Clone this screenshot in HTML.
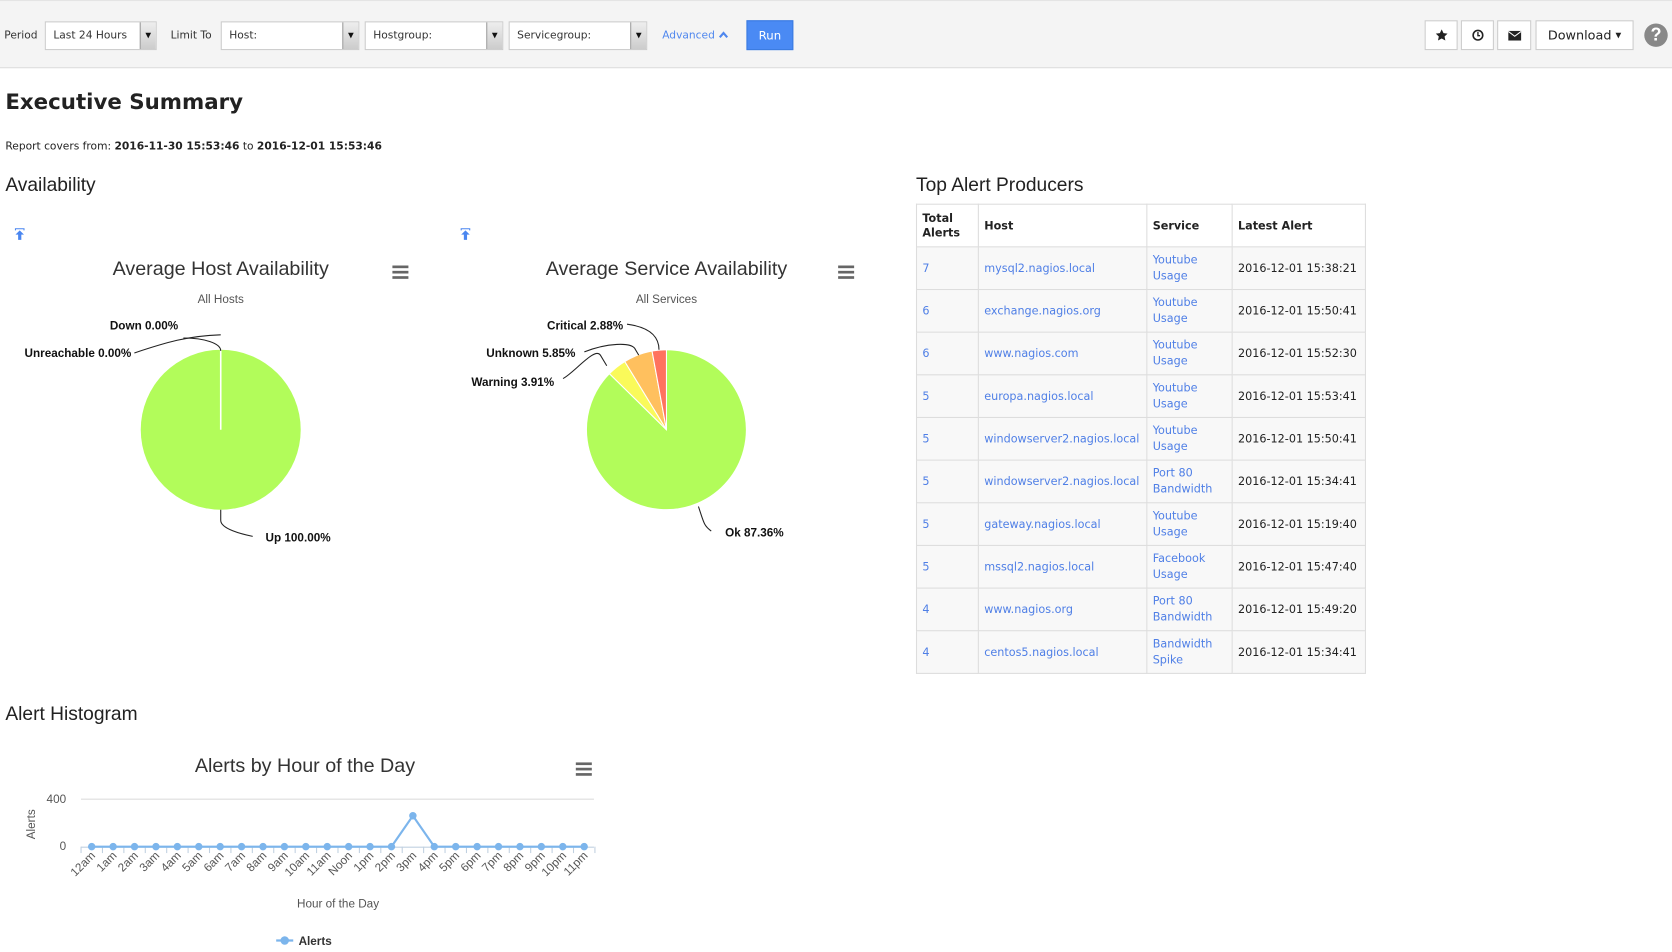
<!DOCTYPE html>
<html><head><meta charset="utf-8">
<style>
*{box-sizing:border-box;margin:0;padding:0}
html,body{width:1672px;height:952px;overflow:hidden;background:#fff}
#w{position:absolute;left:0;top:0;width:1568px;height:893px;transform:scale(1.06633);transform-origin:0 0;font-family:"DejaVu Sans",Verdana,sans-serif;color:#222}
.a{position:absolute;white-space:nowrap}
.tb{position:absolute;left:0;top:0;width:1568px;height:64px;background:#f4f4f4;border-bottom:1px solid #ddd;border-top:1px solid #e4e4e4}
.lbl{font-size:10px;color:#333}
.sel{position:absolute;top:19px;height:27px;background:#fff;border:1px solid #ccc;font-size:10px;color:#333;padding:7px 0 0 7px}
.sel .ar{position:absolute;right:0;top:0;width:15px;height:25px;background:linear-gradient(#eee,#ccc);border-left:1px solid #999;font-size:7px;text-align:center;padding-top:8px;color:#111}
.btn{position:absolute;top:18px;height:28px;background:#fff;border:1px solid #ccc;text-align:center}
.h2{font-family:"Liberation Sans",sans-serif;font-size:18px;color:#222}
table{border-collapse:collapse;font-size:10.5px}
td,th{border:1px solid #ddd;padding:0 5px;text-align:left;vertical-align:middle}
th{font-weight:bold;height:40px;background:#fff}
td{height:40px;background:#f8f8f8;color:#222}
td a{color:#4f7fe6;text-decoration:none}
svg text{font-family:"Liberation Sans",sans-serif}
</style></head><body><div id="w">
<div class="tb">
 <span class="a lbl" style="left:4px;top:27px">Period</span>
 <div class="sel" style="left:42px;width:105px">Last 24 Hours<div class="ar">▼</div></div>
 <span class="a lbl" style="left:160px;top:27px">Limit To</span>
 <div class="sel" style="left:207px;width:130px">Host:<div class="ar">▼</div></div>
 <div class="sel" style="left:342px;width:130px">Hostgroup:<div class="ar">▼</div></div>
 <div class="sel" style="left:477px;width:130px">Servicegroup:<div class="ar">▼</div></div>
 <span class="a" style="left:621px;top:27px;font-size:10px;color:#4f87ee">Advanced <svg width="9" height="7" viewBox="0 0 9 7"><path d="M1 6l3.5-4 3.5 4" fill="none" stroke="#4f87ee" stroke-width="2"/></svg></span>
 <div class="a" style="left:700px;top:18px;width:44px;height:28px;background:#4a8af4;border:1px solid #3b7be0;color:#fff;font-size:11px;text-align:center;line-height:28px">Run</div>
 <div class="btn" style="left:1336px;width:31px"><svg width="12" height="12" viewBox="0 0 24 24" style="margin-top:7px"><path d="M12 1l3.4 7.2 7.6.9-5.6 5.3 1.5 7.6L12 18.2 5.1 22l1.5-7.6L1 9.1l7.6-.9z" fill="#222"/></svg></div>
 <div class="btn" style="left:1370px;width:31px"><svg width="12" height="12" viewBox="0 0 24 24" style="margin-top:7px"><circle cx="12" cy="12" r="9" fill="none" stroke="#222" stroke-width="3"/><path d="M12 6v7h4" fill="none" stroke="#222" stroke-width="2.5"/></svg></div>
 <div class="btn" style="left:1404px;width:32px"><svg width="13" height="11" viewBox="0 0 26 20" style="margin-top:8px"><rect x="1" y="1" width="24" height="18" fill="#222"/><path d="M1 2l12 9 12-9" fill="none" stroke="#fff" stroke-width="2"/></svg></div>
 <div class="btn" style="left:1440px;width:92px;font-size:12px;color:#222;line-height:27px">Download <span style="font-size:7px;vertical-align:2px">▼</span></div>
 <div class="a" style="left:1542px;top:21px;width:22px;height:22px;border-radius:50%;background:#888;color:#fff;font:bold 17px 'Liberation Sans',sans-serif;text-align:center;line-height:22px">?</div>
</div>

<div class="a" style="left:5px;top:83px;font-size:20px;font-weight:bold;color:#222">Executive Summary</div>
<div class="a" style="left:5px;top:132px;font-size:10px;color:#222">Report covers from: <b>2016-11-30 15:53:46</b> to <b>2016-12-01 15:53:46</b></div>
<div class="a h2" style="left:5px;top:163px">Availability</div>
<div class="a h2" style="left:859px;top:163px">Top Alert Producers</div>
<div class="a h2" style="left:5px;top:659px">Alert Histogram</div>

<svg class="a" style="left:0;top:0" width="860" height="893">
 <g fill="#4a86f0"><path d="M14 214h9v2h-1v-1h-7v1h-1z"/><path d="M18.5 216l4 4h-2.5v5h-3v-5h-2.5z"/></g>
 <g fill="#4a86f0"><path d="M432 214h9v2h-1v-1h-7v1h-1z"/><path d="M436.5 216l4 4h-2.5v5h-3v-5h-2.5z"/></g>
 <text x="207" y="258" text-anchor="middle" font-size="18.5" fill="#333">Average Host Availability</text>
 <text x="207" y="284" text-anchor="middle" font-size="11" fill="#555">All Hosts</text>
 <g fill="#666"><rect x="368" y="249" width="15" height="2.5"/><rect x="368" y="254" width="15" height="2.5"/><rect x="368" y="259" width="15" height="2.5"/></g>
 <circle cx="207" cy="403" r="75" fill="#b2fc5a"/>
 <line x1="207" y1="403" x2="207" y2="328" stroke="#fff" stroke-width="1.5"/>
 <g fill="none" stroke="#222" stroke-width="1">
  <path d="M172 317c20 0 35 5 35 12"/><path d="M126 331c30-10 50-16 81-17"/>
  <path d="M207 478v10c0 8 20 13 30 15"/>
 </g>
 <g font-size="11" font-weight="bold" fill="#111">
  <text x="103" y="309">Down 0.00%</text><text x="23" y="335">Unreachable 0.00%</text><text x="249" y="508">Up 100.00%</text>
 </g>

 <text x="625" y="258" text-anchor="middle" font-size="18.5" fill="#333">Average Service Availability</text>
 <text x="625" y="284" text-anchor="middle" font-size="11" fill="#555">All Services</text>
 <g fill="#666"><rect x="786" y="249" width="15" height="2.5"/><rect x="786" y="254" width="15" height="2.5"/><rect x="786" y="259" width="15" height="2.5"/></g>
 <g stroke="#fff" stroke-width="1">
  <path d="M625 403L625 328A75 75 0 1 1 571.5 350.4Z" fill="#b2fc5a"/>
  <path d="M625 403L571.5 350.4A75 75 0 0 1 585.9 339Z" fill="#fafa5a"/>
  <path d="M625 403L585.9 339A75 75 0 0 1 611.5 329.2Z" fill="#ffc05e"/>
  <path d="M625 403L611.5 329.2A75 75 0 0 1 625 328Z" fill="#ff725e"/>
 </g>
 <g fill="none" stroke="#222" stroke-width="1">
  <path d="M588 304c15 2 30 8 30 24"/><path d="M548 330c20-8 45-10 48-2l3 5"/>
  <path d="M528 355c10-5 30-30 35-22l6 10"/><path d="M655 475c5 15 5 18 12 23"/>
 </g>
 <g font-size="11" font-weight="bold" fill="#111">
  <text x="513" y="309">Critical 2.88%</text><text x="456" y="335">Unknown 5.85%</text><text x="442" y="362">Warning 3.91%</text><text x="680" y="503">Ok 87.36%</text>
 </g>

 <text x="286" y="724" text-anchor="middle" font-size="18.5" fill="#333">Alerts by Hour of the Day</text>
 <g fill="#666"><rect x="540" y="715" width="15" height="2.5"/><rect x="540" y="720" width="15" height="2.5"/><rect x="540" y="725" width="15" height="2.5"/></g>
 <line x1="76" y1="749.5" x2="557" y2="749.5" stroke="#ddd"/>
 <line x1="76" y1="794.5" x2="557" y2="794.5" stroke="#c0d0e0"/>
 <g font-size="11" fill="#555"><text x="62" y="753" text-anchor="end">400</text><text x="62" y="797" text-anchor="end">0</text>
 <text transform="translate(33,773) rotate(-90)" text-anchor="middle">Alerts</text>
 <text x="317" y="851" text-anchor="middle">Hour of the Day</text></g>
 <g id="ticks" stroke="#c0d0e0"></g>
 <polyline id="ln" fill="none" stroke="#7cb5ec" stroke-width="2"/>
 <g id="pts" fill="#7cb5ec"></g>
 <g id="xl" font-size="11" fill="#555"></g>
 <line x1="259" y1="882" x2="275" y2="882" stroke="#7cb5ec" stroke-width="2"/><circle cx="267" cy="882" r="4" fill="#7cb5ec"/>
 <text x="280" y="886" font-size="11" font-weight="bold" fill="#333">Alerts</text>
</svg>

<table class="a" style="left:859px;top:191px;width:422px">
<tr><th style="width:58px;line-height:14px">Total<br>Alerts</th><th style="width:158px">Host</th><th style="width:80px">Service</th><th>Latest Alert</th></tr>
<tr><td><a>7</a></td><td><a>mysql2.nagios.local</a></td><td style="line-height:15px"><a>Youtube<br>Usage</a></td><td>2016-12-01 15:38:21</td></tr>
<tr><td><a>6</a></td><td><a>exchange.nagios.org</a></td><td style="line-height:15px"><a>Youtube<br>Usage</a></td><td>2016-12-01 15:50:41</td></tr>
<tr><td><a>6</a></td><td><a>www.nagios.com</a></td><td style="line-height:15px"><a>Youtube<br>Usage</a></td><td>2016-12-01 15:52:30</td></tr>
<tr><td><a>5</a></td><td><a>europa.nagios.local</a></td><td style="line-height:15px"><a>Youtube<br>Usage</a></td><td>2016-12-01 15:53:41</td></tr>
<tr><td><a>5</a></td><td><a>windowserver2.nagios.local</a></td><td style="line-height:15px"><a>Youtube<br>Usage</a></td><td>2016-12-01 15:50:41</td></tr>
<tr><td><a>5</a></td><td><a>windowserver2.nagios.local</a></td><td style="line-height:15px"><a>Port 80<br>Bandwidth</a></td><td>2016-12-01 15:34:41</td></tr>
<tr><td><a>5</a></td><td><a>gateway.nagios.local</a></td><td style="line-height:15px"><a>Youtube<br>Usage</a></td><td>2016-12-01 15:19:40</td></tr>
<tr><td><a>5</a></td><td><a>mssql2.nagios.local</a></td><td style="line-height:15px"><a>Facebook<br>Usage</a></td><td>2016-12-01 15:47:40</td></tr>
<tr><td><a>4</a></td><td><a>www.nagios.org</a></td><td style="line-height:15px"><a>Port 80<br>Bandwidth</a></td><td>2016-12-01 15:49:20</td></tr>
<tr><td><a>4</a></td><td><a>centos5.nagios.local</a></td><td style="line-height:15px"><a>Bandwidth<br>Spike</a></td><td>2016-12-01 15:34:41</td></tr>
</table>
</div>
<script>
var ns="http://www.w3.org/2000/svg",L=["12am","1am","2am","3am","4am","5am","6am","7am","8am","9am","10am","11am","Noon","1pm","2pm","3pm","4pm","5pm","6pm","7pm","8pm","9pm","10pm","11pm"];
var pts=[],g=document.getElementById("pts"),xl=document.getElementById("xl"),tk=document.getElementById("ticks");
for(var i=0;i<24;i++){var x=86+i*20.08,y=i==15?765:794;pts.push(x+","+y);
var c=document.createElementNS(ns,"circle");c.setAttribute("cx",x);c.setAttribute("cy",y);c.setAttribute("r",3.5);g.appendChild(c);
var t=document.createElementNS(ns,"text");t.setAttribute("text-anchor","end");t.setAttribute("transform","translate("+(x+4)+",803) rotate(-45)");t.textContent=L[i];xl.appendChild(t);}
for(var j=0;j<=24;j++){var l=document.createElementNS(ns,"line"),xx=76+j*20.08;l.setAttribute("x1",xx);l.setAttribute("x2",xx);l.setAttribute("y1",794);l.setAttribute("y2",800);tk.appendChild(l);}
document.getElementById("ln").setAttribute("points",pts.join(" "));
</script>
</body></html>
